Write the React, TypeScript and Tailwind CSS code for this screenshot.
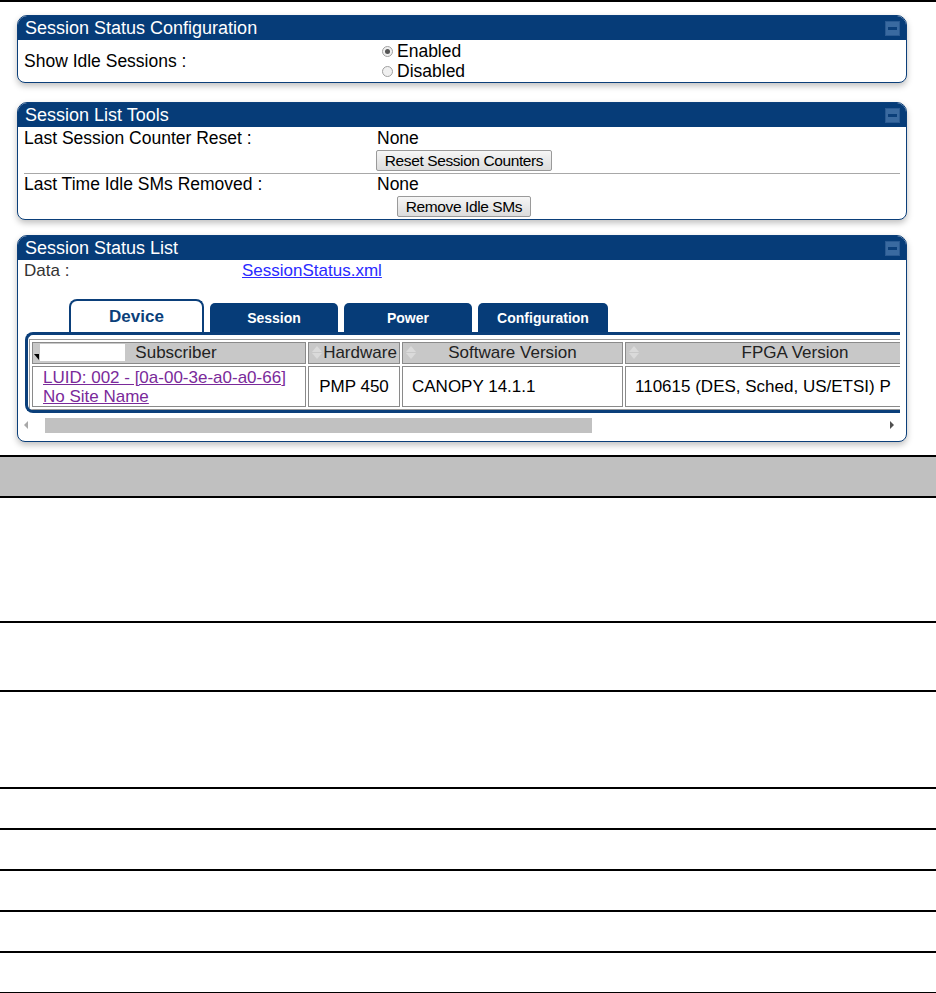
import React from 'react';

const blue = 'bg-[#063c78]';

function MinBtn() {
  return (
    <div className="ml-auto mr-[6px] flex h-[15px] w-[15px] items-center justify-center border border-[#2a5a92] bg-[#3a6aa0]">
      <div className="h-[3px] w-[9px] bg-[#0b3f7a]" />
    </div>
  );
}

function Panel({
  title,
  titleClass = '',
  children,
}: {
  title: string;
  titleClass?: string;
  children: React.ReactNode;
}) {
  return (
    <div className="ml-[17px] w-[890px] overflow-hidden rounded-t-[10px] rounded-b-[8px] border border-[#0b3f7a] bg-white shadow-[0_3px_6px_rgba(0,0,0,0.25)]">
      <div className={`flex h-[24px] items-center ${blue} pl-[7px] text-white ${titleClass}`}>
        <span>{title}</span>
        <MinBtn />
      </div>
      {children}
    </div>
  );
}

function Radio({ checked }: { checked?: boolean }) {
  return (
    <span className="mr-[4px] inline-flex h-[11px] w-[11px] items-center justify-center rounded-full border border-[#a0a0a0] bg-[#f0f0f0]">
      {checked && <span className="h-[5px] w-[5px] rounded-full bg-[#555]" />}
    </span>
  );
}

function Btn({ children }: { children: React.ReactNode }) {
  return (
    <button className="h-[21px] rounded-[2px] border border-[#9a9a9a] bg-gradient-to-b from-[#f6f6f6] to-[#dcdcdc] px-[8px] text-[15.5px] leading-none tracking-[-0.4px] text-black [font-family:'Liberation_Sans',Arial,sans-serif]">
      {children}
    </button>
  );
}

function Sort() {
  return (
    <span className="absolute left-[3px] top-[3px] flex flex-col gap-[1px]">
      <span className="h-0 w-0 border-x-[5px] border-b-[6px] border-x-transparent border-b-[#dadada]" />
      <span className="h-0 w-0 border-x-[5px] border-t-[6px] border-x-transparent border-t-[#dadada]" />
    </span>
  );
}

function Tab({ label, active, w }: { label: string; active?: boolean; w: string }) {
  if (active) {
    return (
      <div
        className={`${w} flex h-[33px] items-end justify-center rounded-t-[8px] border-2 border-b-0 border-[#0b3f7a] bg-white pb-[3px] text-[17px] font-bold text-[#0b3f7a]`}
      >
        {label}
      </div>
    );
  }
  return (
    <div
      className={`${w} flex h-[29px] items-center justify-center rounded-t-[5px] ${blue} pt-[2px] text-[14px] font-bold text-white`}
    >
      {label}
    </div>
  );
}

function Row({ label, button }: { label: string; button: string }) {
  return (
    <div className="flex">
      <div className="w-[351px] leading-[20px]">{label}</div>
      <div className="flex flex-col">
        <div className="pl-[2px] leading-[20px]">None</div>
        <div className="flex w-[178px] justify-center pt-[2px] pb-[2px]">
          <Btn>{button}</Btn>
        </div>
      </div>
    </div>
  );
}

const cell = 'border border-[#8a8a8a]';

export default function App() {
  return (
    <div className="min-h-[993px] w-[936px] bg-white text-black [font-family:'Liberation_Sans',Arial,sans-serif]">
      <div className="h-[2px] w-full bg-black" />
      <div className="h-[13px]" />

      <Panel title="Session Status Configuration" titleClass="text-[18px]">
        <div className="flex h-[42px] items-center text-[17.5px]">
          <div className="w-[364px] pl-[6px]">Show Idle Sessions :</div>
          <div className="flex flex-col leading-[20px]">
            <label className="flex items-center">
              <Radio checked />
              Enabled
            </label>
            <label className="flex items-center">
              <Radio />
              Disabled
            </label>
          </div>
        </div>
      </Panel>

      <div className="h-[19px]" />

      <Panel title="Session List Tools" titleClass="text-[18px]">
        <div className="px-[6px] pt-[1px] text-[17.5px]">
          <div className="border-b border-[#a8a8a8]">
            <Row label="Last Session Counter Reset :" button="Reset Session Counters" />
          </div>
          <Row label="Last Time Idle SMs Removed :" button="Remove Idle SMs" />
        </div>
      </Panel>

      <div className="h-[15px]" />

      <Panel title="Session Status List" titleClass="text-[18px]">
        <div className="flex pl-[6px] pt-[1px] text-[17px] leading-[20px]">
          <div className="w-[218px] text-[#333]">Data :</div>
          <a href="#" className="text-[#2a2aff] underline">
            SessionStatus.xml
          </a>
        </div>
        <div className="flex items-end gap-[6px] pl-[51px] pt-[18px]">
          <Tab label="Device" active w="w-[135px]" />
          <Tab label="Session" w="w-[128px]" />
          <Tab label="Power" w="w-[128px]" />
          <Tab label="Configuration" w="w-[130px]" />
        </div>
        <div className="ml-[7px] mr-[6px] overflow-hidden rounded-l-[8px] border-y-[3px] border-l-[3px] border-[#0b3f7a] pl-[1px] pt-[4px]">
          <table className="w-[939px] table-fixed border-separate border-spacing-[2px] border border-[#999] text-[17px]">
            <thead>
              <tr className="bg-[#c8c8c8] text-[#222]">
                <th className={`relative h-[22px] w-[274px] p-0 font-normal leading-[20px] ${cell}`}>
                  <span className="absolute left-[7px] top-[1px] h-[17px] w-[85px] bg-white" />
                  <span className="absolute left-[1px] top-[11px] h-0 w-0 border-l-[5px] border-t-[6px] border-l-transparent border-t-black" />
                  <span className="relative pl-[14px]">Subscriber</span>
                </th>
                <th className={`relative w-[92px] p-0 pl-[12px] font-normal leading-[20px] ${cell}`}>
                  <Sort />
                  Hardware
                </th>
                <th className={`relative w-[221px] p-0 font-normal leading-[20px] ${cell}`}>
                  <Sort />
                  Software Version
                </th>
                <th className={`relative w-[340px] p-0 font-normal leading-[20px] ${cell}`}>
                  <Sort />
                  FPGA Version
                </th>
              </tr>
            </thead>
            <tbody>
              <tr>
                <td className={`h-[41px] whitespace-nowrap px-[10px] leading-[19px] ${cell}`}>
                  <a href="#" className="text-[#7a2a9a] underline">
                    LUID: 002 - [0a-00-3e-a0-a0-66]
                  </a>
                  <br />
                  <a href="#" className="text-[#7a2a9a] underline">
                    No Site Name
                  </a>
                </td>
                <td className={`text-center ${cell}`}>PMP 450</td>
                <td className={`px-[9px] ${cell}`}>CANOPY 14.1.1</td>
                <td className={`whitespace-nowrap px-[9px] ${cell}`}>
                  110615 (DES, Sched, US/ETSI) P
                </td>
              </tr>
            </tbody>
          </table>
        </div>
        <div className="flex h-[22px] items-center px-[6px] pt-[2px]">
          <span className="h-0 w-0 border-y-[4px] border-r-[4px] border-y-transparent border-r-[#a8a8a8]" />
          <div className="ml-[17px] h-[15px] w-[547px] bg-[#c1c1c1]" />
          <span className="ml-auto mr-[6px] h-0 w-0 border-y-[4px] border-l-[4px] border-y-transparent border-l-[#505050]" />
        </div>
        <div className="h-[6px]" />
      </Panel>

      <div className="h-[13px]" />

      <div className="w-full">
        <div className="h-[43px] border-y-2 border-black bg-[#c0c0c0]" />
        <div className="h-[125px] border-b-2 border-black" />
        <div className="h-[69px] border-b-2 border-black" />
        <div className="h-[97px] border-b-2 border-black" />
        <div className="h-[41px] border-b-2 border-black" />
        <div className="h-[41px] border-b-2 border-black" />
        <div className="h-[41px] border-b-2 border-black" />
        <div className="h-[41px] border-b-2 border-black" />
        <div className="h-[41px] border-b-2 border-black" />
      </div>
    </div>
  );
}
